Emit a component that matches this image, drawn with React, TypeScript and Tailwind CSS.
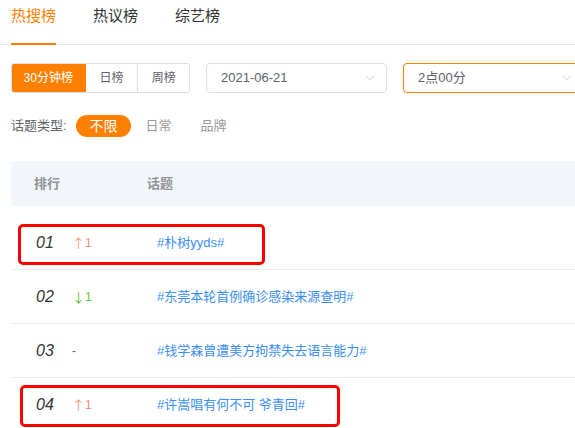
import { ChevronDown } from "lucide-react"

const rows = [
    { rank: "01", trend: "up", change: "1", topic: "#朴树yyds#", mark: "w-[247px] left-[7px] top-[8px] h-[41px]" },
    { rank: "02", trend: "down", change: "1", topic: "#东莞本轮首例确诊感染来源查明#" },
    { rank: "03", trend: "none", change: "", topic: "#钱学森曾遭美方拘禁失去语言能力#" },
    { rank: "04", trend: "up", change: "1", topic: "#许嵩唱有何不可 爷青回#", mark: "w-[320px] left-[9px] top-[7px] h-[42px]" },
]

export default function App() {
    return (
        <div className="w-[575px] h-[428px] overflow-hidden bg-white text-[#333]" style={{ fontFamily: '"Liberation Sans", "Noto Sans CJK SC", sans-serif' }}>
            {/* tabs */}
            <div className="h-[45px] border-b border-[#e4e7ed] flex gap-[37px] pl-[11px]">
                <div className="h-[45px] pt-[5px] leading-[22px] text-[15px] text-[#ff7f00] border-b-2 border-[#ff7f00]">热搜榜</div>
                <div className="h-[45px] pt-[5px] leading-[22px] text-[15px] text-[#333]">热议榜</div>
                <div className="h-[45px] pt-[5px] leading-[22px] text-[15px] text-[#333]">综艺榜</div>
            </div>

            <div className="pl-[11px] w-[700px]">
                {/* filters */}
                <div className="flex mt-[18px] h-[30px] items-stretch">
                    <div className="flex shrink-0 w-[179px] rounded-[3px] border border-[#dcdfe6] overflow-hidden text-[12px]">
                        <div className="w-[75px] -my-px -ml-px bg-[#ff7f00] text-white flex items-center justify-center">30分钟榜</div>
                        <div className="w-[52px] flex items-center justify-center text-[#606266]">日榜</div>
                        <div className="w-[52px] flex items-center justify-center text-[#606266] border-l border-[#dcdfe6]">周榜</div>
                    </div>
                    <div className="ml-[16px] shrink-0 w-[181px] rounded-[4px] border border-[#dcdfe6] flex items-center justify-between pl-[14px] pr-[9px] text-[13px] text-[#606266]">
                        <span>2021-06-21</span>
                        <ChevronDown size={14} strokeWidth={1.5} className="text-[#c0c4cc]" />
                    </div>
                    <div className="ml-[16px] shrink-0 w-[182px] rounded-[4px] border border-[#ff7f00] flex items-center justify-between pl-[14px] pr-[10px] text-[13px] text-[#606266]">
                        <span>2点00分</span>
                        <ChevronDown size={14} strokeWidth={1.5} className="text-[#c0c4cc]" />
                    </div>
                </div>

                {/* topic type */}
                <div className="flex items-center mt-[22px] h-[22px] text-[13px]">
                    <span className="w-[65px] text-[#606266]">话题类型:</span>
                    <span className="w-[55px] h-[22px] rounded-full bg-[#ff7f00] text-white text-[14px] flex items-center justify-center">不限</span>
                    <span className="w-[55px] text-center text-[#999]">日常</span>
                    <span className="w-[55px] text-center text-[#999]">品牌</span>
                </div>

                {/* table header */}
                <div className="mt-[24px] h-[45px] bg-[#f2f6fa] flex items-center text-[13px] font-bold text-[#909399]">
                    <span className="w-[136px] pl-[23px]">排行</span>
                    <span>话题</span>
                </div>

                {/* rows */}
                <div className="mt-[10px]">
                    {rows.map((r) => (
                        <div key={r.rank} className="relative h-[54px] border-b border-[#ebeef5] flex items-center">
                            <span className="w-[61px] pl-[25px] italic text-[16px] text-[#333]">{r.rank}</span>
                            <span className="w-[85px] text-[12px] flex items-center">
                                {r.trend === "up" && <span className="text-[#f78989] flex items-center"><span className="text-[13px] text-[#fb9b7c] font-['Noto_Sans_CJK_SC']">↑</span><span>{r.change}</span></span>}
                                {r.trend === "down" && <span className="text-[#67c23a] flex items-center"><span className="text-[13px] font-['Noto_Sans_CJK_SC']">↓</span><span>{r.change}</span></span>}
                                {r.trend === "none" && <span className="text-[#606266]">-</span>}
                            </span>
                            <span className="text-[13px] text-[#3a8ef6]">{r.topic}</span>
                            {r.mark && <div className={`absolute border-[3px] border-[#ff0000] rounded-[5px] ${r.mark}`} />}
                        </div>
                    ))}
                </div>
            </div>
        </div>
    )
}
